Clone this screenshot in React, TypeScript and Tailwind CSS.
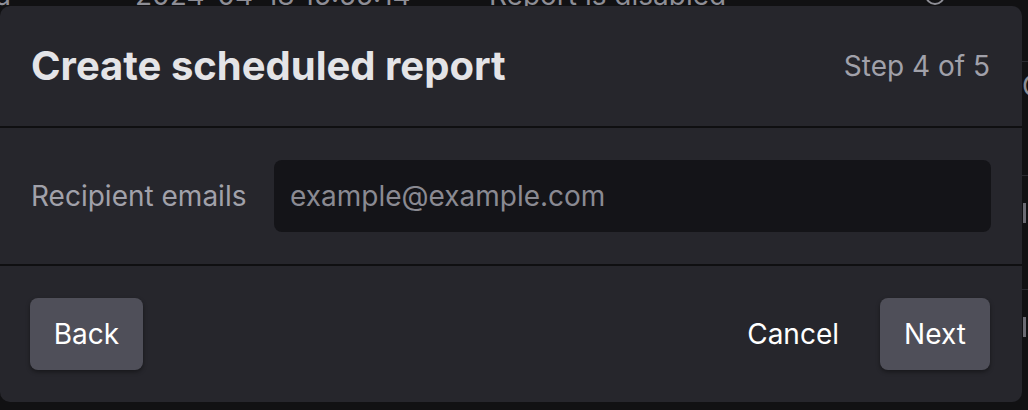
import React from "react";

export default function App() {
  const font = { fontFamily: "Inter, 'Noto Sans', sans-serif" };
  return (
    <div className="relative w-[1028px] h-[410px] overflow-hidden bg-[#111113]" style={font}>
      {/* background page content */}
      <div className="absolute left-[-14px] top-[-22px] w-[1060px] flex items-center h-[34px] text-[28px] text-[#8e8e96] whitespace-nowrap">
        <span className="w-[149px]">ta</span>
        <span className="w-[354px]">2024-04-18 15:55:14</span>
        <span className="w-[430px]">Report is disabled</span>
        <span className="ml-[6px] w-[20px] h-[20px] rounded-full border-2 border-[#8e8e96]"></span>
      </div>
      <div className="absolute right-0 top-0 w-[7px] h-full flex flex-col">
        <div className="h-[62px] border-b border-[#2a2a30]"></div>
        <div className="h-[114px] border-b border-[#2a2a30] text-[28px] leading-[28px] text-[#8e8e96] pt-[10px] pl-[1px] overflow-hidden">C</div>
        <div className="h-[114px] border-b border-[#2a2a30] pt-[27px] pl-[2px]">
          <div className="w-[3px] h-[20px] bg-[#6b6b73]"></div>
        </div>
        <div className="h-[114px] pt-[27px] pl-[2px]">
          <div className="w-[3px] h-[20px] bg-[#6b6b73]"></div>
        </div>
      </div>

      {/* modal */}
      <div className="absolute left-0 top-[6px] w-[1022px] h-[396px] rounded-[10px] bg-[#26262c] flex flex-col">
        <div className="h-[122px] flex items-center justify-between px-[31px] border-b-2 border-[#0f0f11]">
          <h1 className="text-[40px] font-bold text-[#e4e4e7] leading-[48px]">Create scheduled report</h1>
          <span className="text-[28px] text-[#a1a1aa] pr-[1px]">Step 4 of 5</span>
        </div>
        <div className="h-[138px] flex items-center px-[31px] border-b-2 border-[#0f0f11]">
          <label className="text-[28px] text-[#a1a1aa] w-[243px]">Recipient emails</label>
          <div className="flex-1 h-[72px] rounded-[8px] bg-[#141418] flex items-center px-[16px] text-[28px] text-[#8a8a92]">
            example@example.com
          </div>
        </div>
        <div className="flex-1 flex items-center justify-between px-[30px]">
          <button className="h-[72px] w-[113px] rounded-[8px] bg-[#4f4f59] text-white text-[28px] shadow-[0_2px_4px_rgba(0,0,0,0.4)]">
            Back
          </button>
          <div className="flex items-center gap-[41px] pr-[2px]">
            <button className="text-[28px] text-white">Cancel</button>
            <button className="h-[72px] w-[110px] rounded-[8px] bg-[#4f4f59] text-white text-[28px] shadow-[0_2px_4px_rgba(0,0,0,0.4)]">
              Next
            </button>
          </div>
        </div>
      </div>
    </div>
  );
}
